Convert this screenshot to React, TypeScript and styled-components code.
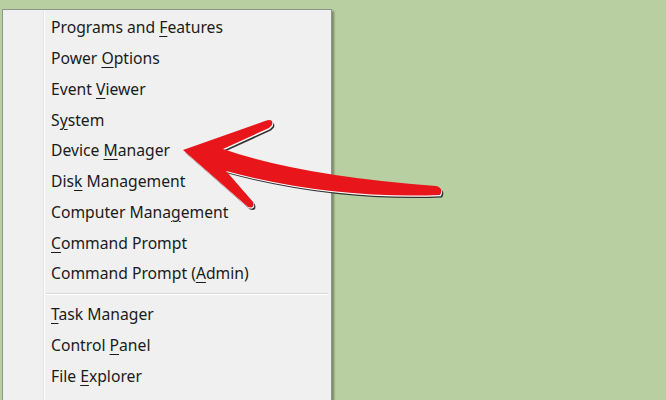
import React from "react";
import styled, { createGlobalStyle } from "styled-components";

const Global = createGlobalStyle`
  html, body { margin: 0; padding: 0; }
  body {
    background: #b8cfa1;
    width: 666px;
    height: 400px;
    overflow: hidden;
    font-family: "Noto Sans", "Open Sans", sans-serif;
  }
`;

const Page = styled.div`
  position: relative;
  width: 666px;
  height: 400px;
  overflow: hidden;
  padding: 9px 0 0 2px;
  box-sizing: border-box;
`;

const Menu = styled.div`
  width: 330px;
  height: 420px;
  box-sizing: border-box;
  background: #f0f0f0;
  border: 1px solid #8f948c;
  box-shadow: 2px 2px 2px rgba(40, 50, 35, 0.45);
  display: grid;
  grid-template-columns: 40px 1px 1px 1fr;
`;

const Gutter = styled.div`
  background: #f0f0f0;
`;

const GutterLine = styled.div<{ $tone: string }>`
  background: ${(p) => p.$tone};
`;

const List = styled.div`
  display: flex;
  flex-direction: column;
  padding-top: 2px;
  padding-right: 3px;
`;

const Item = styled.div`
  height: 30.75px;
  display: flex;
  align-items: center;
  padding-left: 6px;
  font-size: 15.7px;
  color: #1b1b1b;
  white-space: pre;
`;

const Label = styled.span`
  white-space: pre;
`;

const Key = styled.span`
  text-decoration: underline;
  text-underline-offset: 3px;
  text-decoration-thickness: 1px;
`;

const Separator = styled.div`
  height: 10px;
  display: flex;
  align-items: center;
  padding-left: 1px;
  &::before {
    content: "";
    flex: 1;
    border-top: 1px solid #d7d7d7;
    border-bottom: 1px solid #ffffff;
  }
`;

const ArrowLayer = styled.svg`
  position: absolute;
  left: 0;
  top: 0;
  width: 666px;
  height: 400px;
  pointer-events: none;
`;

type Entry = { pre: string; key: string; post: string } | "sep";

const entries: Entry[] = [
  { pre: "Programs and ", key: "F", post: "eatures" },
  { pre: "Power ", key: "O", post: "ptions" },
  { pre: "Event ", key: "V", post: "iewer" },
  { pre: "S", key: "y", post: "stem" },
  { pre: "Device ", key: "M", post: "anager" },
  { pre: "Dis", key: "k", post: " Management" },
  { pre: "Computer Mana", key: "g", post: "ement" },
  { pre: "", key: "C", post: "ommand Prompt" },
  { pre: "Command Prompt (", key: "A", post: "dmin)" },
  "sep",
  { pre: "", key: "T", post: "ask Manager" },
  { pre: "Control ", key: "P", post: "anel" },
  { pre: "File ", key: "E", post: "xplorer" },
  { pre: "", key: "S", post: "earch" },
];

const arrowPath =
  "M183,150 L265,121 Q274,118 272,125 L269,128 L223,149 Q300,176 436,186 Q444,188 440,195 Q330,199 226,171 L253,202 Q255,209 248,207 Z";

export default function App() {
  return (
    <>
      <Global />
      <Page>
        <Menu>
          <Gutter />
          <GutterLine $tone="#e2e3e3" />
          <GutterLine $tone="#ffffff" />
          <List>
            {entries.map((e, i) =>
              e === "sep" ? (
                <Separator key={i} />
              ) : (
                <Item key={i}>
                  <Label>
                    {e.pre}
                    <Key>{e.key}</Key>
                    {e.post}
                  </Label>
                </Item>
              )
            )}
          </List>
        </Menu>
        <ArrowLayer viewBox="0 0 666 400">
          <path d={arrowPath} fill="#1e1e1e" transform="translate(2,2.6)" opacity="0.9" />
          <path d={arrowPath} fill="#ffffff" transform="translate(0.8,1.2)" />
          <path d={arrowPath} fill="#e8161b" />
        </ArrowLayer>
      </Page>
    </>
  );
}
